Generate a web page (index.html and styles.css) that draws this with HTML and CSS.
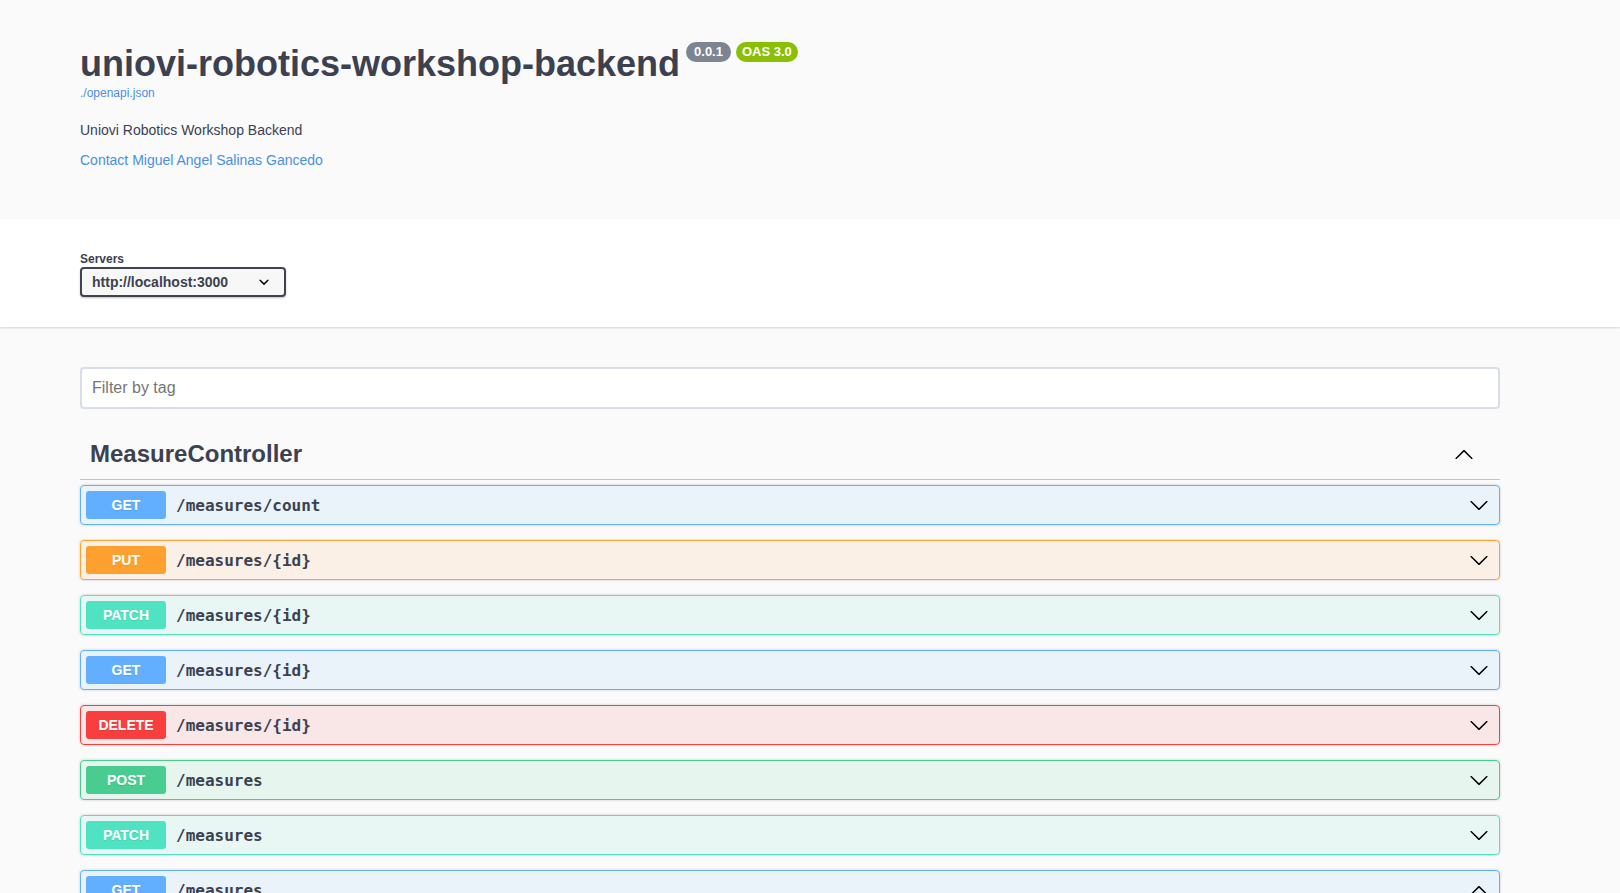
FILE: index.html
```html
<!DOCTYPE html>
<html lang="en">
<head>
<meta charset="utf-8">
<title>Swagger UI</title>
<link rel="stylesheet" href="styles.css">
</head>
<body>
<div class="swagger-ui">
  <section class="info-section">
    <div class="wrapper">
      <div class="info">
        <hgroup class="main">
          <h2 class="title">uniovi-robotics-workshop-backend<span class="badge version">0.0.1</span><span class="badge version-stamp">OAS 3.0</span></h2>
          <a class="spec-link" href="#">./openapi.json</a>
        </hgroup>
        <div class="description"><p>Uniovi Robotics Workshop Backend</p></div>
        <div class="contact"><a href="#">Contact Miguel Angel Salinas Gancedo</a></div>
      </div>
    </div>
  </section>

  <section class="scheme-container">
    <div class="wrapper">
      <div class="servers">
        <span class="servers-title">Servers</span>
        <div class="select">
          <span>http://localhost:3000</span>
          <svg class="select-arrow" viewBox="0 0 20 20" width="20" height="20"><path d="M13.418 7.859a.695.695 0 0 1 .978 0 .68.68 0 0 1 0 .969l-3.908 3.830a.697.697 0 0 1-.979 0l-3.908-3.830a.68.68 0 0 1 0-.969.695.695 0 0 1 .978 0L10 11l3.418-3.141z"/></svg>
        </div>
      </div>
    </div>
  </section>

  <div class="wrapper">
    <div class="filter">
      <input class="operation-filter-input" type="text" placeholder="Filter by tag">
    </div>

    <h3 class="opblock-tag">
      <span class="tag-name">MeasureController</span>
      <span class="expand-operation">
        <svg viewBox="0 0 20 20" width="20" height="20"><path d="M17.418 14.908c.272.268.709.268.979 0s.271-.701 0-.969l-7.908-7.83c-.27-.268-.707-.268-.979 0l-7.908 7.83c-.27.268-.27.701 0 .969.271.268.709.268.979 0L10 7.767l7.418 7.141z"/></svg>
      </span>
    </h3>

    <div class="opblock get">
      <div class="opblock-summary">
        <span class="method">GET</span>
        <span class="path">/measures/count</span>
        <svg class="arrow" viewBox="0 0 20 20" width="20" height="20"><path d="M17.418 6.109c.272-.268.709-.268.979 0s.271.701 0 .969l-7.908 7.83c-.27.268-.707.268-.979 0l-7.908-7.83c-.27-.268-.27-.701 0-.969.271-.268.709-.268.979 0L10 13.25l7.418-7.141z"/></svg>
      </div>
    </div>

    <div class="opblock put">
      <div class="opblock-summary">
        <span class="method">PUT</span>
        <span class="path">/measures/{id}</span>
        <svg class="arrow" viewBox="0 0 20 20" width="20" height="20"><path d="M17.418 6.109c.272-.268.709-.268.979 0s.271.701 0 .969l-7.908 7.83c-.27.268-.707.268-.979 0l-7.908-7.83c-.27-.268-.27-.701 0-.969.271-.268.709-.268.979 0L10 13.25l7.418-7.141z"/></svg>
      </div>
    </div>

    <div class="opblock patch">
      <div class="opblock-summary">
        <span class="method">PATCH</span>
        <span class="path">/measures/{id}</span>
        <svg class="arrow" viewBox="0 0 20 20" width="20" height="20"><path d="M17.418 6.109c.272-.268.709-.268.979 0s.271.701 0 .969l-7.908 7.83c-.27.268-.707.268-.979 0l-7.908-7.83c-.27-.268-.27-.701 0-.969.271-.268.709-.268.979 0L10 13.25l7.418-7.141z"/></svg>
      </div>
    </div>

    <div class="opblock get">
      <div class="opblock-summary">
        <span class="method">GET</span>
        <span class="path">/measures/{id}</span>
        <svg class="arrow" viewBox="0 0 20 20" width="20" height="20"><path d="M17.418 6.109c.272-.268.709-.268.979 0s.271.701 0 .969l-7.908 7.83c-.27.268-.707.268-.979 0l-7.908-7.83c-.27-.268-.27-.701 0-.969.271-.268.709-.268.979 0L10 13.25l7.418-7.141z"/></svg>
      </div>
    </div>

    <div class="opblock delete">
      <div class="opblock-summary">
        <span class="method">DELETE</span>
        <span class="path">/measures/{id}</span>
        <svg class="arrow" viewBox="0 0 20 20" width="20" height="20"><path d="M17.418 6.109c.272-.268.709-.268.979 0s.271.701 0 .969l-7.908 7.83c-.27.268-.707.268-.979 0l-7.908-7.83c-.27-.268-.27-.701 0-.969.271-.268.709-.268.979 0L10 13.25l7.418-7.141z"/></svg>
      </div>
    </div>

    <div class="opblock post">
      <div class="opblock-summary">
        <span class="method">POST</span>
        <span class="path">/measures</span>
        <svg class="arrow" viewBox="0 0 20 20" width="20" height="20"><path d="M17.418 6.109c.272-.268.709-.268.979 0s.271.701 0 .969l-7.908 7.83c-.27.268-.707.268-.979 0l-7.908-7.83c-.27-.268-.27-.701 0-.969.271-.268.709-.268.979 0L10 13.25l7.418-7.141z"/></svg>
      </div>
    </div>

    <div class="opblock patch">
      <div class="opblock-summary">
        <span class="method">PATCH</span>
        <span class="path">/measures</span>
        <svg class="arrow" viewBox="0 0 20 20" width="20" height="20"><path d="M17.418 6.109c.272-.268.709-.268.979 0s.271.701 0 .969l-7.908 7.83c-.27.268-.707.268-.979 0l-7.908-7.83c-.27-.268-.27-.701 0-.969.271-.268.709-.268.979 0L10 13.25l7.418-7.141z"/></svg>
      </div>
    </div>

    <div class="opblock get">
      <div class="opblock-summary">
        <span class="method">GET</span>
        <span class="path">/measures</span>
        <svg class="arrow" viewBox="0 0 20 20" width="20" height="20"><path d="M17.418 14.908c.272.268.709.268.979 0s.271-.701 0-.969l-7.908-7.83c-.27-.268-.707-.268-.979 0l-7.908 7.83c-.27.268-.27.701 0 .969.271.268.709.268.979 0L10 7.767l7.418 7.141z"/></svg>
      </div>
      <div class="opblock-body">
        <div class="opblock-section-header"><h4>Parameters</h4></div>
        <div class="no-params">No parameters</div>
      </div>
    </div>
  </div>
</div>
</body>
</html>
```

FILE: styles.css
```css
html, body {
  margin: 0;
  padding: 0;
}

body {
  background: #fafafa;
  font-family: "Liberation Sans", Arial, sans-serif;
  color: #3b4151;
}

.wrapper {
  box-sizing: border-box;
  width: 1420px;
  margin: 0 0 0 80px;
}

/* ---------- info ---------- */
.info {
  padding: 42px 0 51px;
}

.main {
  margin: 0 0 22px;
}

.title {
  margin: 0;
  font-size: 36px;
  font-weight: 700;
  line-height: 44px;
  color: #3b4151;
}

.badge {
  display: inline-block;
  position: relative;
  top: -20px;
  margin-left: 6px;
  padding: 2px 6px;
  border-radius: 57px;
  background: #7d8492;
  color: #fff;
  font-size: 13px;
  font-weight: 700;
  line-height: 16px;
  vertical-align: baseline;
}

.badge.version {
  padding: 2px 8px;
}

.badge + .badge {
  margin-left: 5px;
}

.badge.version-stamp {
  background: #89bf04;
}

.spec-link {
  display: block;
  font-size: 12px;
  line-height: 14px;
  color: #4990e2;
  text-decoration: none;
}

.description p {
  margin: 0 0 14px;
  font-size: 14px;
  line-height: 16px;
  color: #3b4151;
}

.contact a {
  display: block;
  font-size: 14px;
  line-height: 16px;
  color: #4990e2;
  text-decoration: none;
}

/* ---------- servers ---------- */
.scheme-container {
  background: #fff;
  box-shadow: 0 1px 2px 0 rgba(0, 0, 0, .15);
  padding: 33px 0 30px;
  margin: 0 0 20px;
}

.servers {
  display: flex;
  flex-direction: column;
  align-items: flex-start;
}

.servers-title {
  font-size: 12px;
  font-weight: 700;
  line-height: 14px;
  color: #3b4151;
  margin-bottom: 1px;
}

.select {
  box-sizing: border-box;
  display: flex;
  align-items: center;
  justify-content: space-between;
  width: 206px;
  height: 30px;
  padding: 0 10px 0 10px;
  background: #f7f7f7;
  border: 2px solid #41444e;
  border-radius: 4px;
  box-shadow: 0 1px 2px 0 rgba(0, 0, 0, .25);
  font-size: 14px;
  font-weight: 700;
  color: #3b4151;
}

.select-arrow {
  width: 20px;
  height: 20px;
  fill: #000;
}

/* ---------- filter ---------- */
.filter {
  padding: 20px 0;
}

.operation-filter-input {
  box-sizing: border-box;
  display: block;
  width: 100%;
  height: 42px;
  margin: 0;
  padding: 10px;
  border: 2px solid #d8dde7;
  border-radius: 4px;
  background: #fff;
  font-family: "Liberation Sans", Arial, sans-serif;
  font-size: 16px;
  color: #3b4151;
  outline: none;
}

.operation-filter-input::placeholder {
  color: #757575;
}

/* ---------- tag ---------- */
.opblock-tag {
  display: flex;
  align-items: center;
  justify-content: space-between;
  height: 30px;
  margin: 0 0 5px;
  padding: 10px 20px 10px 10px;
  border-bottom: 1px solid rgba(59, 65, 81, .3);
  font-size: 24px;
  font-weight: 700;
  color: #3b4151;
}

.expand-operation {
  display: flex;
  padding: 0 6px;
}

.expand-operation svg {
  width: 20px;
  height: 20px;
  fill: #000;
}

/* ---------- operations ---------- */
.opblock {
  margin: 0 0 15px;
  border: 1px solid #000;
  border-radius: 4px;
  box-shadow: 0 0 3px rgba(0, 0, 0, .19);
}

.opblock-summary {
  display: flex;
  align-items: center;
  padding: 5px;
}

.method {
  min-width: 80px;
  padding: 6px 0;
  border-radius: 3px;
  color: #fff;
  font-size: 14px;
  font-weight: 700;
  line-height: 16px;
  text-align: center;
  text-shadow: 0 1px 0 rgba(0, 0, 0, .1);
}

.path {
  flex: 1;
  padding: 0 10px;
  font-family: "DejaVu Sans Mono", "Liberation Mono", monospace;
  font-size: 16px;
  font-weight: 600;
  color: #3b4151;
}

.arrow {
  width: 20px;
  height: 20px;
  margin-right: 5px;
  fill: #000;
}

.opblock.get { border-color: #61affe; background: rgba(97, 175, 254, .1); }
.opblock.get .method { background: #61affe; }

.opblock.put { border-color: #fca130; background: rgba(252, 161, 48, .1); }
.opblock.put .method { background: #fca130; }

.opblock.patch { border-color: #50e3c2; background: rgba(80, 227, 194, .1); }
.opblock.patch .method { background: #50e3c2; }

.opblock.delete { border-color: #f93e3e; background: rgba(249, 62, 62, .1); }
.opblock.delete .method { background: #f93e3e; }

.opblock.post { border-color: #49cc90; background: rgba(73, 204, 144, .1); }
.opblock.post .method { background: #49cc90; }

.opblock-body {
  border-top: 1px solid #61affe;
}

.opblock-section-header {
  padding: 8px 20px;
  background: hsla(0, 0%, 100%, .8);
  box-shadow: 0 1px 2px rgba(0, 0, 0, .1);
}

.opblock-section-header h4 {
  margin: 0;
  font-size: 14px;
  color: #3b4151;
}

.no-params {
  padding: 20px;
  font-size: 12px;
}
```
